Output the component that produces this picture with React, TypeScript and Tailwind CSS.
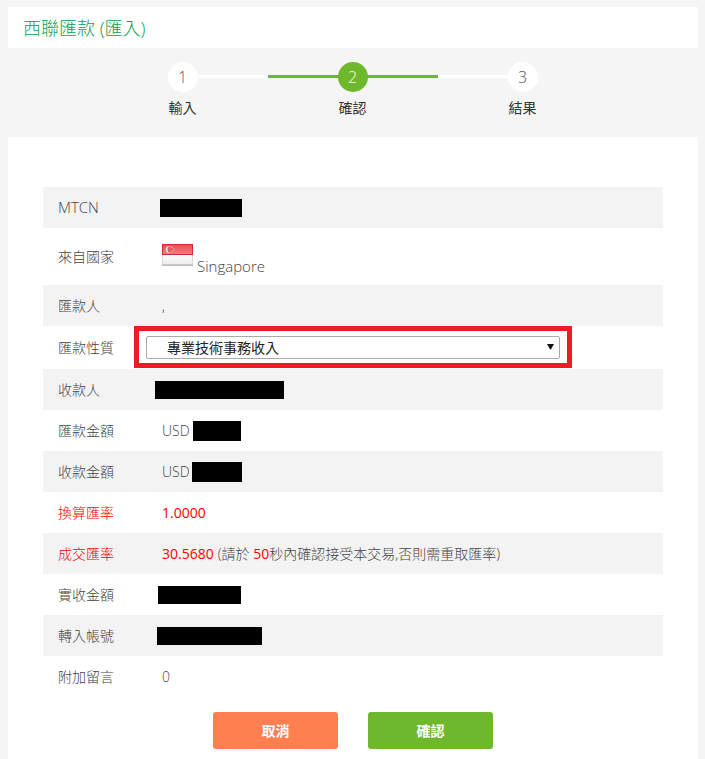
import React from "react";

const font = "font-['Open_Sans','Noto_Sans_CJK_TC',sans-serif]";

function Row({
  label,
  shaded,
  red,
  className,
  children,
}: {
  label: React.ReactNode;
  shaded?: boolean;
  red?: boolean;
  className?: string;
  children?: React.ReactNode;
}) {
  return (
    <div className={`flex items-center pl-[15px] ${shaded ? "bg-[#f3f3f3]" : ""} ${className ?? "h-[41px]"}`}>
      <div className={`w-[104px] shrink-0 text-sm font-light ${red ? "text-[#ff0000]" : "text-[#444]"}`}>{label}</div>
      <div className={`flex items-center text-sm ${red ? "font-normal text-[#ff0000]" : "font-light text-[#444]"}`}>
        {children}
      </div>
    </div>
  );
}

function Step({ n, label, active }: { n: number; label: string; active?: boolean }) {
  return (
    <div className="relative z-10 flex w-[30px] flex-col items-center">
      <div
        className={`flex h-[30px] w-[30px] items-center justify-center rounded-full text-base font-light ${
          active ? "bg-[#6eb82d] text-white" : "bg-white text-[#555]"
        }`}
      >
        {n}
      </div>
      <div className="mt-[7px] whitespace-nowrap text-sm leading-[18px] text-[#333]">{label}</div>
    </div>
  );
}

function Flag() {
  return (
    <svg width="31" height="22" viewBox="0 0 31 22" className="shrink-0">
      <defs>
        <linearGradient id="sgRed" x1="0" y1="0" x2="0" y2="1">
          <stop offset="0" stopColor="#ea4a52" />
          <stop offset="1" stopColor="#f47f84" />
        </linearGradient>
        <linearGradient id="sgWhite" x1="0" y1="0" x2="0" y2="1">
          <stop offset="0" stopColor="#ffffff" />
          <stop offset="1" stopColor="#ececec" />
        </linearGradient>
      </defs>
      <rect x="0.5" y="10" width="30" height="10.5" fill="url(#sgWhite)" stroke="#d9d9d9" />
      <rect x="0.5" y="0.5" width="30" height="10" fill="url(#sgRed)" stroke="#cf2a36" />
      <circle cx="7" cy="5.5" r="3.2" fill="#fbe3e3" />
      <circle cx="8.4" cy="5.5" r="3" fill="#ec5a61" />
      <circle cx="10" cy="3.5" r="0.6" fill="#fff" />
      <circle cx="12" cy="5" r="0.6" fill="#fff" />
      <circle cx="10" cy="7" r="0.6" fill="#fff" />
      <rect x="0" y="20.5" width="31" height="1.5" fill="#bdbdbd" />
    </svg>
  );
}

export default function App() {
  return (
    <div className={`${font} h-[759px] w-[705px] overflow-hidden bg-[#f5f5f5] px-2 pt-[7px]`}>
      <div className="flex h-[41px] w-[690px] items-center bg-white pl-[15px] text-lg font-light text-[#0a9f4f]">
        西聯匯款 (匯入)
      </div>

      <div className="relative mx-auto mt-[14px] flex h-[75px] w-[370px] justify-between">
        <div className="absolute left-[15px] top-[13px] flex h-[3px] w-[340px]">
          <div className="w-[85px] bg-white" />
          <div className="w-[170px] bg-[#6eb82d]" />
          <div className="w-[85px] bg-white" />
        </div>
        <Step n={1} label="輸入" />
        <Step n={2} label="確認" active />
        <Step n={3} label="結果" />
      </div>

      <div className="h-[622px] w-[690px] bg-white px-[35px] pt-[50px]">
        <Row label={<span className="text-[15px]">MTCN</span>} shaded>
          <span className="ml-[-2px] inline-block h-[18px] w-[82px] bg-black" />
        </Row>
        <Row label="來自國家" className="h-[57px]">
          <div className="flex -translate-y-[2px] items-end">
            <Flag />
            <span className="ml-[4px] translate-y-[9px] text-[15px] leading-[18px]">Singapore</span>
          </div>
        </Row>
        <Row label="匯款人" shaded>
          ,
        </Row>
        <div className="flex h-[43px] items-center pl-[15px]">
          <div className="w-[76px] shrink-0 text-sm font-light text-[#444]">匯款性質</div>
          <div className="flex h-[42px] w-[438px] items-center justify-center self-start border-[5px] border-[#ed1c24]">
            <div className="flex h-[23px] w-[414px] items-center">
              <div className="relative h-[23px] w-full">
                <select className="block h-[23px] w-full appearance-none rounded-[2px] border border-[#aaa] bg-white pl-5 text-sm leading-[21px] text-[#222]">
                  <option>專業技術事務收入</option>
                </select>
                <svg width="7" height="6" viewBox="0 0 7 6" className="absolute right-[6px] top-[8px]">
                  <path d="M0 0h7L3.5 6z" fill="#111" />
                </svg>
              </div>
            </div>
          </div>
        </div>
        <Row label="收款人" shaded>
          <span className="ml-[-7px] inline-block h-[18px] w-[129px] bg-black" />
        </Row>
        <Row label="匯款金額">
          USD
          <span className="ml-[3px] inline-block h-5 w-12 bg-black" />
        </Row>
        <Row label="收款金額" shaded>
          USD
          <span className="ml-[2px] inline-block h-5 w-[50px] bg-black" />
        </Row>
        <Row label="換算匯率" red>
          1.0000
        </Row>
        <Row label="成交匯率" shaded red>
          30.5680
          <span className="ml-1 font-light text-[#444]">
            (請於 <span className="font-normal text-[#ff0000]">50</span>秒內確認接受本交易,否則需重取匯率)
          </span>
        </Row>
        <Row label="實收金額">
          <span className="ml-[-4px] inline-block h-[18px] w-[83px] bg-black" />
        </Row>
        <Row label="轉入帳號" shaded>
          <span className="ml-[-5px] inline-block h-[18px] w-[105px] bg-black" />
        </Row>
        <Row label="附加留言">0</Row>

        <div className="mt-[15px] flex justify-center gap-[30px]">
          <button className="h-[37px] w-[125px] rounded-[3px] bg-[#ff7f50] text-sm font-bold text-white">
            取消
          </button>
          <button className="h-[37px] w-[125px] rounded-[3px] bg-[#6eb82d] text-sm font-bold text-white">
            確認
          </button>
        </div>
      </div>
    </div>
  );
}
